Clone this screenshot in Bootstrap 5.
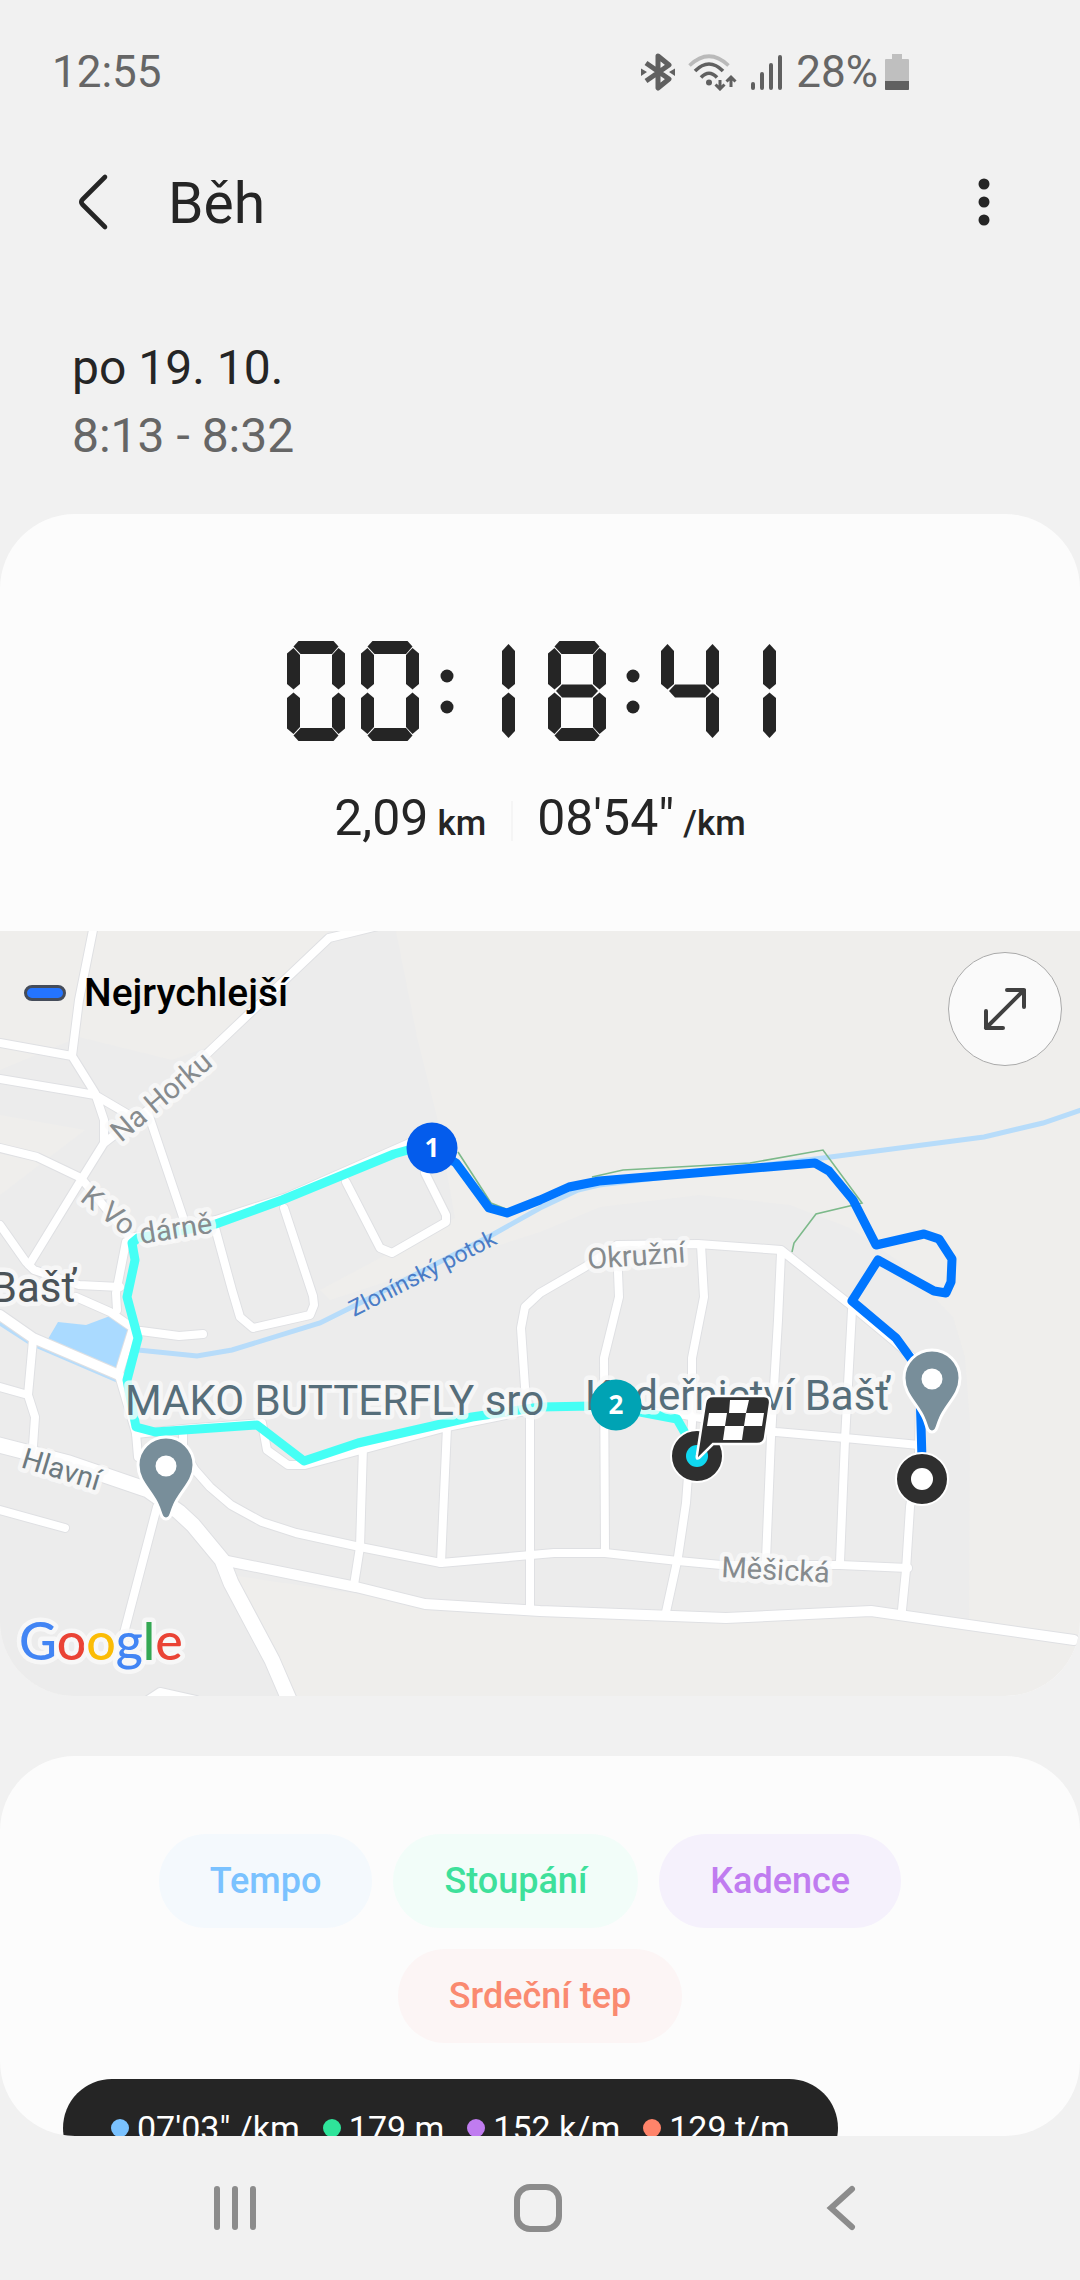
<!DOCTYPE html>
<html lang="cs">
<head>
<meta charset="utf-8">
<meta name="viewport" content="width=device-width, initial-scale=1">
<title>Běh</title>
<link href="https://cdn.jsdelivr.net/npm/bootstrap@5.3.0/dist/css/bootstrap.min.css" rel="stylesheet">
<style>
  body { background: #f1f1f1; color: #252525; font-family: Roboto, "Liberation Sans", sans-serif; }
  svg { display: block; }
  .screen { height: 100vh; min-height: 1200px; }
  .status-bar { height: 143px; padding: 0 171px 0 52px; font-size: 44px; color: #666; }
  .status-icons { gap: 13px; }
  .charge { gap: 7px; }
  .app-bar { height: 118px; padding: 0 72px; }
  .app-title { font-size: 57px; line-height: 64px; font-weight: 400; margin-left: 56px; padding-top: 4px; }
  .icon-btn { border: 0; background: none; padding: 0; color: #252525; }
  .when { padding: 73px 72px 44px; font-size: 48px; line-height: 68px; }
  .when-time { color: #666; }
  .panel { background: #fcfcfc; border-radius: 75px; overflow: hidden; }
  .panel-summary { margin-bottom: 60px; }
  .summary { padding: 127px 0 80px; }
  .clock { margin: 0 auto 50px; width: 506px; height: 100px; fill: #252525; }
  .stats { font-size: 50px; line-height: 60px; height: 60px; }
  .stat { gap: 9px; }
  .stats small { font-size: 35px; font-weight: 500; }
  .stat-rule { width: 2px; height: 40px; background: #f5f5f5; margin: 0 24px 0 25px; }
  .map svg.map-art { width: 100%; height: auto; }
  .legend { top: 42px; left: 24px; gap: 18px; font-size: 39px; line-height: 40px; font-weight: 500; color: #000; }
  .legend-key { width: 42px; height: 16px; border: 3px solid #454c5a; border-radius: 8px; background: #2474ff; }
  .expand { top: 21px; right: 18px; width: 114px; height: 114px; border: 1px solid #aaa; border-radius: 50%; background: #fafafa; }
  .panel-chart { padding-top: 78px; min-height: 0; }
  .chips { gap: 21px; margin-bottom: 21px; }
  .chips-main { padding-right: 20px; }
  .chip { height: 94px; padding: 0 51px; border: 0; border-radius: 47px; font-size: 36px; line-height: 46px; font-weight: 500; }
  .chip-pace { background: #f4f9fd; color: #7ac2ff; }
  .chip-climb { background: #f2fdf9; color: #3ee09b; }
  .chip-cadence { background: #f5f1fc; color: #c07cf0; }
  .chip-heart { background: #fcf5f5; color: #fa8a70; }
  .readout { margin: 36px 0 0 63px; padding: 26px 48px; border-radius: 50px; background: #252525; color: #fff; width: max-content; font-size: 34px; line-height: 46px; gap: 23px; }
  .readout-item { gap: 8px; }
  .dot { width: 18px; height: 18px; border-radius: 50%; }
  .dot-pace { background: #7ac2ff; }
  .dot-climb { background: #2fe49a; }
  .dot-cadence { background: #c07cf0; }
  .dot-heart { background: #ff846a; }
  .nav-keys { height: 144px; padding: 0 88px 0 84px; }
  .nav-keys svg { fill: none; stroke: #8c8c8c; stroke-width: 6; }
  .roads { fill: none; stroke-linecap: round; stroke-linejoin: round; }
  .street { font-size: 29px; fill: #868b8e; }
  .place { font-size: 42px; fill: #566e7a; }
  .halo { stroke: #fafafa; stroke-opacity: .8; stroke-width: 9; stroke-linejoin: round; paint-order: stroke; }
  .pin-num { font: 700 26px "Open Sans", sans-serif; fill: #fff; text-anchor: middle; }
  .wordmark { font: 500 52px Lato, sans-serif; }
</style>
</head>
<body>
<div class="screen d-flex flex-column overflow-hidden">

  <div class="status-bar d-flex align-items-center justify-content-between flex-shrink-0">
    <span>12:55</span>
    <div class="status-icons d-flex align-items-center">
      <svg width="34" height="38" viewBox="0 0 34 38" aria-label="Bluetooth"><path d="M5 10L28 26L17 35V3L28 12L5 28" fill="none" stroke="#606060" stroke-width="5" stroke-linejoin="round"/><path d="M0 15.500L6 19L0 23zM34 15.500L28 19L34 23z" fill="#606060"/></svg>
      <svg width="50" height="38" viewBox="0 0 50 38" aria-label="Wi-Fi"><g fill="none" stroke="#606060" stroke-width="3.600"><path d="M1.500 12.500Q21 -6 40.500 12.500" stroke="#bababa"/><path d="M7 18Q21 4 35 18"/><path d="M13 24.500Q21 16 29 24.500"/><path d="M32 27V36M27.500 31.500L32 36L36.500 31.500M43 34V24M38.500 28.500L43 24L47.500 28.500" stroke-width="3"/></g><circle cx="21" cy="29.500" r="3" fill="#606060"/></svg>
      <svg width="32" height="36" viewBox="0 0 32 36" aria-label="Signál"><path d="M2 34V30M11 34V20M20 34V11M29 34V3" stroke="#606060" stroke-width="4" stroke-linecap="round" fill="none"/></svg>
      <div class="charge d-flex align-items-center"><span>28%</span>
      <svg width="24" height="36" viewBox="0 0 24 36" aria-label="Baterie"><path d="M7 0H17V5H23Q24 5 24 6V35Q24 36 23 36H1Q0 36 0 35V6Q0 5 1 5H7z" fill="#bfbfbf"/><path d="M0 27H24V35Q24 36 23 36H1Q0 36 0 35z" fill="#606060"/></svg></div>
    </div>
  </div>

  <header class="app-bar d-flex align-items-center flex-shrink-0">
    <button class="icon-btn" aria-label="Zpět"><svg width="40" height="60" viewBox="0 0 40 60"><path d="M33 5L10.500 27.500Q8 30 10.500 32.500L33 55" fill="none" stroke="#252525" stroke-width="4.600" stroke-linecap="round"/></svg></button>
    <h1 class="app-title mb-0">Běh</h1>
    <button class="icon-btn ms-auto" aria-label="Více možností"><svg width="48" height="60" viewBox="0 0 48 60" fill="#252525"><circle cx="24" cy="12" r="5.500"/><circle cx="24" cy="30" r="5.500"/><circle cx="24" cy="48" r="5.500"/></svg></button>
  </header>

  <div class="when flex-shrink-0">
    <div>po 19. 10.</div>
    <div class="when-time">8:13 - 8:32</div>
  </div>

  <section class="panel panel-summary flex-shrink-0">
    <div class="summary">
      <svg class="clock" viewBox="0 0 506 100" role="img" aria-label="00:18:41">
        <defs>
          <path id="sv" d="M6.500 7L13 14V43L6.500 48.500L0 43V12.500z"/>
          <path id="sh" d="M11.500 0H46.500L51.500 5.500L45 13H13.500L6.500 5.500z"/>
          <path id="sm" d="M8 50L14 43.500H44L50 50L44 56.500H14z"/>
          <path id="st" d="M6.500 3L13 10V43L6.500 48.500L0 43V10z"/>
          <g id="side"><use href="#sv"/><use href="#sv" transform="translate(0 100) scale(1 -1)"/></g>
          <g id="ring"><use href="#side"/><use href="#side" transform="translate(58) scale(-1 1)"/><use href="#sh"/><use href="#sh" transform="translate(0 100) scale(1 -1)"/></g>
          <g id="bar"><use href="#st" x="45"/><use href="#st" transform="translate(45 100) scale(1 -1)"/></g>
          <g id="sep"><circle cx="0" cy="35" r="6.500"/><circle cx="0" cy="66" r="6.500"/></g>
        </defs>
        <use href="#ring"/><use href="#ring" x="74"/><use href="#sep" x="160"/>
        <use href="#bar" x="170"/><use href="#ring" x="261"/><use href="#sm" x="261"/><use href="#sep" x="346"/>
        <use href="#st" x="374"/><use href="#sm" x="374"/><use href="#bar" x="374"/><use href="#bar" x="431"/>
      </svg>
      <div class="stats d-flex justify-content-center align-items-center">
        <div class="stat d-flex align-items-baseline"><span>2,09</span><small>km</small></div>
        <div class="stat-rule"></div>
        <div class="stat d-flex align-items-baseline"><span>08'54"</span><small>/km</small></div>
      </div>
    </div>

    <div class="map position-relative">
      <svg class="map-art" viewBox="0 931 1080 765" role="img" aria-label="Mapa trasy">
        <defs>
          <g id="minor">
            <path d="M94 925L79 1000L72 1056L95 1093L104 1120V1143L81 1180L29 1265M0 1043L72 1056M0 1079L72 1091L95 1095L129 1115M104 1143L117 1133L148 1110L213 1048L329 938L382 925"/>
            <path d="M148 1113L183 1217M214 1224L232 1290L240 1317L253 1328L310 1315L314 1305L313 1296L284 1208M346 1182L380 1248L392 1253L446 1222V1215L425 1173"/>
            <path d="M0 1148L37 1157L81 1178L130 1238L216 1220L287 1197L412 1142M0 1225L26 1262L34 1270L79 1285L120 1287M126 1242L116 1293L117 1310M76 1297L110 1312L133 1328L119 1373"/>
            <path d="M119 1375L136 1433L138 1457M33 1340L28 1395L35 1417L33 1446M0 1387L28 1395M0 1510L65 1528M157 1507L124 1633M141 1331L179 1336L203 1334"/>
            <path d="M136 1434L183 1429V1450L195 1470L210 1487L231 1505L262 1522L296 1533L360 1547L441 1563L554 1553H605L678 1561L721 1565H840L908 1568"/>
            <path d="M363 1447L360 1547L354 1585M447 1427L441 1563M183 1429L262 1423L267 1450L288 1465H305L447 1427L530 1410M530 1610V1417L525 1387L521 1328L525 1307L540 1293L585 1267L617 1245L698 1244L781 1250L848 1303L895 1342L912 1357L920 1400L919 1453L910 1507L906 1570L902 1610"/>
            <path d="M617 1247L619 1297L604 1358L605 1553M701 1245L704 1297L692 1358V1423L686 1503L678 1557L666 1612M781 1253L778 1320L771 1437L766 1560M852 1310L845 1440L840 1562M605 1407L685 1415L776 1432L845 1438L919 1445M148 1700L160 1692L196 1700"/>
          </g>
          <g id="mid"><path d="M0 1315L33 1338L119 1375M227 1561L356 1587L425 1604L540 1611L726 1618L871 1611L1074 1640"/></g>
          <g id="major"><path d="M-5 1444L69 1463L148 1490L179 1512L193 1525L222 1560L231 1583L272 1660L291 1704"/></g>
          <g id="pin"><path d="M0 53C-5 53 -5 47 -8 40C-14 25 -28 16 -28 -1A28 28 0 0 1 28 -1C28 16 14 25 8 40C5 47 5 53 0 53z" fill="#788e9a" stroke="#fff" stroke-width="3"/><circle r="10.500" fill="#fff"/></g>
        </defs>
        <rect y="931" width="1080" height="765" fill="#efeeec"/>
        <path d="M0 1115L85 1130L0 1195V1700H291L231 1575L425 1604L540 1611L726 1618L871 1611L969 1620L970 1423L965 1357L953 1317L900 1262L850 1228L790 1205L700 1195L600 1207L540 1232L330 1300L320 1290L455 1218L437 1117L417 1037L396 931H329L213 1045L172 1060L79 1037L0 1070z" fill="#ececec"/>
        <path d="M58 1322L86 1325L110 1316L130 1331L116 1372L48 1339z" fill="#aadaff"/>
        <path d="M0 1323L31 1343L117 1380M138 1350L197 1356L232 1350L320 1323L360 1303L492 1235L540 1208L578 1190L599 1185L815 1159L984 1137L1043 1123L1084 1109" fill="none" stroke="#b7dcfa" stroke-width="5"/>
        <g class="roads" stroke="#dfe0e3"><use href="#minor" stroke-width="10"/><use href="#mid" stroke-width="12"/><use href="#major" stroke-width="17"/></g>
        <g class="roads" stroke="#fff"><use href="#minor" stroke-width="8"/><use href="#mid" stroke-width="10"/><use href="#major" stroke-width="15"/></g>
        <path d="M458 1152L491 1203L506 1209M592 1177L623 1170L750 1163L823 1150L862 1203L816 1214L794 1243L792 1252" fill="none" stroke="#7cb98a" stroke-width="1.600"/>
        <path d="M432 1146L408 1150L394 1154L282 1200L213 1225L138 1238L132 1243L135 1260L127 1297L138 1338L127 1380L136 1427L155 1432L257 1425L304 1461L358 1443L472 1417L540 1407L592 1406L640 1412L677 1419L685 1433L697 1456" fill="none" stroke="#45fff5" stroke-width="9" stroke-linejoin="round"/>
        <path d="M432 1148L456 1163L489 1208L507 1213L540 1200L569 1187L599 1181L815 1163L829 1171L853 1200L876 1245L924 1234L939 1239L952 1259L951 1282L946 1293L934 1291L878 1260L852 1301L896 1338L912 1360L920 1390L922 1460" fill="none" stroke="#0076ff" stroke-width="9" stroke-linejoin="round"/>

        <g class="street">
          <text class="halo" transform="translate(121 1143) rotate(-40)">Na Horku</text>
          <text class="halo" transform="translate(79 1200) rotate(38)">K Vo</text>
          <text class="halo" transform="translate(141 1244) rotate(-9)">dárně</text>
          <text class="halo" transform="translate(588 1269) rotate(-4)">Okružní</text>
          <text class="halo" transform="translate(20 1467) rotate(17)" style="fill:#6d7a80">Hlavní</text>
          <text class="halo" transform="translate(721 1577) rotate(3)">Měšická</text>
        </g>
        <text transform="translate(354 1317) rotate(-27)" font-size="23" fill="#4b7cc6">Zlonínský potok</text>
        <text class="place halo" x="76" y="1302" text-anchor="end" style="fill:#4b5358">Bašť</text>
        <text class="place halo" x="125" y="1415">MAKO BUTTERFLY sro</text>
        <text class="place halo" x="585" y="1410">Kadeřnictví Bašť</text>

        <use href="#pin" x="166" y="1466"/><use href="#pin" x="932" y="1379"/>
        <circle cx="432" cy="1148" r="25.500" fill="#045cec"/><text class="pin-num" x="432" y="1157">1</text>
        <circle cx="616" cy="1405" r="25.500" fill="#00a3b4"/><text class="pin-num" x="616" y="1414">2</text>
        <circle cx="922" cy="1479" r="26" fill="#2f2f2f" stroke="#fff" stroke-width="2"/><circle cx="922" cy="1479" r="11" fill="#fff"/>
        <circle cx="697" cy="1456" r="26" fill="#2f2f2f" stroke="#fff" stroke-width="2"/><circle cx="697" cy="1456" r="11" fill="#10d8f0"/>
        <path d="M713 1396H764Q771 1396 770 1404L765 1438Q764 1444 757 1444H713L699 1458Q696 1460 697 1455L705 1403Q706 1396 713 1396z" fill="#2f2f2f" stroke="#fff" stroke-width="2.500"/>
        <path d="M730 1400H749L746 1413H729zM709 1413H727L725 1426H707zM746 1413H764L762 1426H744zM725 1426H744L742 1440H723z" fill="#fff"/>
        <text class="wordmark halo" x="19" y="1660"><tspan fill="#4285f4">G</tspan><tspan fill="#ea4335">o</tspan><tspan fill="#fbbc05">o</tspan><tspan fill="#4285f4">g</tspan><tspan fill="#34a853">l</tspan><tspan fill="#ea4335">e</tspan></text>
      </svg>
      <div class="legend position-absolute d-flex align-items-center"><span class="legend-key"></span><span>Nejrychlejší</span></div>
      <button class="expand position-absolute d-flex align-items-center justify-content-center p-0" aria-label="Zvětšit mapu"><svg width="46" height="46" viewBox="0 0 46 46"><path d="M4 42L42 4M25 4H42V21M4 25V42H21" fill="none" stroke="#404040" stroke-width="4" stroke-linecap="round" stroke-linejoin="round"/></svg></button>
    </div>
  </section>

  <section class="panel panel-chart flex-grow-1">
    <div class="chips chips-main d-flex justify-content-center">
      <button class="chip chip-pace">Tempo</button>
      <button class="chip chip-climb">Stoupání</button>
      <button class="chip chip-cadence">Kadence</button>
    </div>
    <div class="chips d-flex justify-content-center">
      <button class="chip chip-heart">Srdeční tep</button>
    </div>
    <div class="readout d-flex">
      <div class="readout-item d-flex align-items-center"><span class="dot dot-pace"></span>07'03" /km</div>
      <div class="readout-item d-flex align-items-center"><span class="dot dot-climb"></span>179 m</div>
      <div class="readout-item d-flex align-items-center"><span class="dot dot-cadence"></span>152 k/m</div>
      <div class="readout-item d-flex align-items-center"><span class="dot dot-heart"></span>129 t/m</div>
    </div>
  </section>

  <nav class="nav-keys d-flex align-items-center flex-shrink-0" aria-label="Systém">
    <button class="icon-btn flex-fill d-flex justify-content-center w-100" aria-label="Poslední aplikace"><svg width="48" height="48" viewBox="0 0 48 48"><path d="M6 5V43M24 5V43M42 5V43" stroke-linecap="round"/></svg></button>
    <button class="icon-btn flex-fill d-flex justify-content-center w-100" aria-label="Domů"><svg width="48" height="48" viewBox="0 0 48 48"><rect x="3" y="3" width="42" height="42" rx="13"/></svg></button>
    <button class="icon-btn flex-fill d-flex justify-content-center w-100" aria-label="Zpět"><svg width="48" height="48" viewBox="0 0 48 48"><path d="M35 5L14 24L35 43" stroke-linecap="round"/></svg></button>
  </nav>
</div>
<script src="https://cdn.jsdelivr.net/npm/bootstrap@5.3.0/dist/js/bootstrap.bundle.min.js"></script>
</body>
</html>
